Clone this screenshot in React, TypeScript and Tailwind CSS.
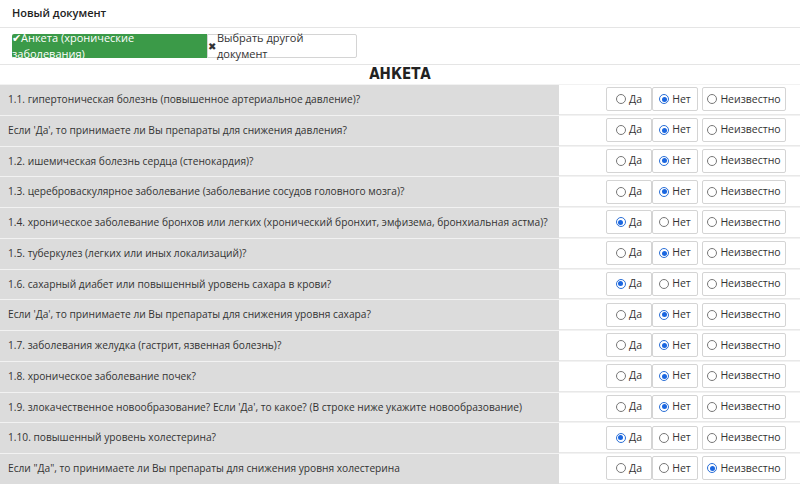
const rows: [string, number][] = [
  ["1.1. гипертоническая болезнь (повышенное артериальное давление)?", 1],
  ["Если 'Да', то принимаете ли Вы препараты для снижения давления?", 1],
  ["1.2. ишемическая болезнь сердца (стенокардия)?", 1],
  ["1.3. цереброваскулярное заболевание (заболевание сосудов головного мозга)?", 1],
  ["1.4. хроническое заболевание бронхов или легких (хронический бронхит, эмфизема, бронхиальная астма)?", 0],
  ["1.5. туберкулез (легких или иных локализаций)?", 1],
  ["1.6. сахарный диабет или повышенный уровень сахара в крови?", 0],
  ["Если 'Да', то принимаете ли Вы препараты для снижения уровня сахара?", 1],
  ["1.7. заболевания желудка (гастрит, язвенная болезнь)?", 1],
  ["1.8. хроническое заболевание почек?", 1],
  ["1.9. злокачественное новообразование? Если 'Да', то какое? (В строке ниже укажите новообразование)", 1],
  ["1.10. повышенный уровень холестерина?", 0],
  ["Если \"Да\", то принимаете ли Вы препараты для снижения уровня холестерина", 2],
];

function Radio({ on }: { on: boolean }) {
  return on ? (
    <span className="inline-block w-[10px] h-[10px] rounded-full border border-[#2b6fd6] bg-white mr-[3px] relative">
      <span className="absolute inset-[1.5px] rounded-full bg-[#1a66e0]" />
    </span>
  ) : (
    <span className="inline-block w-[10px] h-[10px] rounded-full border border-[#777] bg-white mr-[3px]" />
  );
}

function Opt({ label, on, w }: { label: string; on: boolean; w: string }) {
  return (
    <div className={`${w} h-[24px] border border-[#d4d4d4] rounded-[2px] bg-white flex items-center justify-center text-[10.5px] text-[#333]`}>
      <Radio on={on} />
      {label}
    </div>
  );
}

export default function App() {
  return (
    <div className="w-[800px] h-[486px] overflow-hidden bg-white" style={{ fontFamily: '"Open Sans", sans-serif' }}>
      <div className="h-[28px] flex items-center px-[12px] border-b border-[#e5e5e5] text-[11px] font-semibold text-[#222]">
        Новый документ
      </div>
      <div className="h-[37px] flex items-center px-[12px] border-b border-[#e5e5e5]">
        <div className="h-[24px] w-[195px] bg-[#3b9a48] text-white text-[11px] flex items-center justify-center rounded-l-[2px]">
          ✔Анкета (хронические заболевания)
        </div>
        <div className="h-[24px] w-[150px] border border-[#d4d4d4] bg-white text-[#333] text-[11px] flex items-center justify-center rounded-r-[2px]">
          <span className="text-[10px] mr-[1px]">✖</span>Выбрать другой документ
        </div>
      </div>
      <div className="h-[19px] flex items-center justify-center text-[15px] font-bold text-[#222]" style={{ fontFamily: '"DejaVu Sans Condensed", "DejaVu Sans", sans-serif' }}>
        АНКЕТА
      </div>
      {rows.map(([t, v], i) => (
        <div key={i} className="flex h-[30.75px] border-t border-[#f2f2f2]">
          <div className="w-[559px] bg-[#dcdcdc] flex items-center pl-[8px] text-[10.2px] text-[#333] whitespace-nowrap overflow-hidden">
            {t}
          </div>
          <div className="flex-1 flex items-center pl-[47px] border-b border-[#e8e8e8]">
            <Opt label="Да" on={v === 0} w="w-[46px]" />
            <Opt label="Нет" on={v === 1} w="w-[46px]" />
            <div className="w-[4px]" />
            <Opt label="Неизвестно" on={v === 2} w="w-[84px]" />
          </div>
        </div>
      ))}
    </div>
  );
}
